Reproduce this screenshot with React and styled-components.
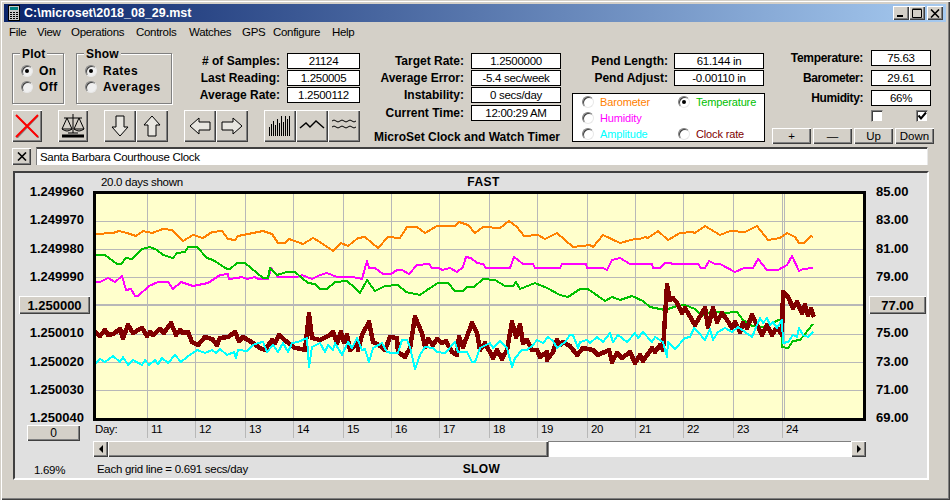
import styled, { createGlobalStyle } from 'styled-components';

const GlobalStyle = createGlobalStyle`
  * { box-sizing: border-box; }
  html, body { margin: 0; padding: 0; background: #d4d0c8; }
  body { font: 11.5px "Liberation Sans", Arial, sans-serif; letter-spacing: -0.3px; color: #000; }
`;

const raised = `
  background: #d4d0c8;
  box-shadow: inset 1px 1px 0 #fff, inset -1px -1px 0 #404040, inset -2px -2px 0 #808080;
`;

const Window = styled.div`
  width: 950px;
  height: 500px;
  padding: 4px;
  overflow: hidden;
  background: #d4d0c8;
  box-shadow: inset 1px 1px 0 #d4d0c8, inset 2px 2px 0 #fff, inset -1px -1px 0 #404040, inset -2px -2px 0 #808080;
`;

const TitleBar = styled.div`
  display: flex;
  align-items: center;
  height: 18px;
  padding: 0 3px 0 4px;
  background: linear-gradient(90deg, #0a246a, #a6caf0);
  color: #fff;
  font-weight: bold;
  font-size: 12.5px;
  letter-spacing: 0;
  svg { display: block; }
`;

const TitleText = styled.span`
  margin-left: 4px;
  flex: 1;
`;

const TitleButton = styled.button`
  ${raised}
  width: 16px;
  height: 14px;
  padding: 0;
  border: 0;
  margin-left: ${(p) => p.$gap || 0}px;
  display: flex;
  align-items: center;
  justify-content: center;
`;

const MenuBar = styled.div`
  display: flex;
  align-items: center;
  height: 20px;
  padding-left: 5px;
`;

const MenuItem = styled.span`
  width: ${(p) => p.$width}px;
`;

const ControlArea = styled.div`
  display: flex;
  padding: 6px 0 3px 8px;
  height: 105px;
`;

const MainBlock = styled.div`
  width: 348px;
`;

const TopRow = styled.div`
  display: flex;
  gap: 12px;
`;

const GroupBox = styled.div`
  position: relative;
  width: ${(p) => p.$width}px;
  height: 51px;
  margin-top: 5px;
  padding: 9px 0 0 ${(p) => p.$pad}px;
  border: 1px solid #808080;
  box-shadow: 1px 1px 0 #fff, inset 1px 1px 0 #fff;
  font-size: 12px;
  font-weight: bold;
  letter-spacing: 0.5px;
`;

const GroupLegend = styled.span`
  position: absolute;
  top: -6px;
  left: 7px;
  padding: 0 2px;
  line-height: 12px;
  background: #d4d0c8;
  font-weight: bold;
  font-size: 12px;
  letter-spacing: 0.2px;
`;

const RadioRow = styled.div`
  display: flex;
  align-items: center;
  gap: ${(p) => p.$gap || 6}px;
  height: 16px;
  color: ${(p) => p.$color || 'inherit'};
`;

const Radio = styled.span`
  flex: none;
  display: flex;
  align-items: center;
  justify-content: center;
  width: 12px;
  height: 12px;
  border-radius: 50%;
  background: ${(p) => p.$bg || '#f0f0f0'};
  border: 1px solid;
  border-color: #808080 #e8e8e8 #e8e8e8 #808080;
  box-shadow: inset 1px 1px 0 #404040;
  &::after {
    content: '';
    width: 4px;
    height: 4px;
    border-radius: 50%;
    background: ${(p) => (p.$on ? '#000' : 'transparent')};
  }
`;

const FieldColumn = styled.div`
  display: flex;
  flex-direction: column;
  gap: ${(p) => p.$gap ?? 1}px;
  flex: ${(p) => (p.$grow ? 1 : 'none')};
  margin-top: ${(p) => p.$top ?? 5}px;
`;

const FieldRow = styled.div`
  display: flex;
  justify-content: flex-end;
  align-items: center;
  gap: ${(p) => p.$gap || 7}px;
  margin-top: ${(p) => p.$top || 0}px;
`;

const FieldLabel = styled.span`
  font-size: 12px;
  font-weight: bold;
  letter-spacing: ${(p) => p.$spacing || 0}px;
  white-space: nowrap;
`;

const Field = styled.div`
  width: ${(p) => p.$width}px;
  height: 16px;
  line-height: 14px;
  border: 1px solid #000;
  background: #fff;
  text-align: center;
  white-space: nowrap;
`;

const Toolbar = styled.div`
  display: flex;
  gap: 16px;
  margin-top: 6px;
`;

const ButtonCluster = styled.div`
  display: flex;
`;

const IconButton = styled.button`
  ${raised}
  width: 32px;
  height: 32px;
  padding: 0;
  border: 0;
  display: flex;
  align-items: center;
  justify-content: center;
`;

const MiddleBlock = styled.div`
  width: 187px;
  margin-left: 14px;
`;

const AppCaption = styled.div`
  margin-top: 9px;
  font-size: 12px;
  font-weight: bold;
  line-height: 14px;
  letter-spacing: 0;
  white-space: nowrap;
`;

const PendBlock = styled.div`
  width: 193px;
  margin-left: 11px;
`;

const PendFields = styled(FieldColumn)`
  padding-right: 1px;
`;

const LegendBox = styled.div`
  display: grid;
  grid-template-columns: 96px 1fr;
  grid-auto-rows: 16px;
  height: 49px;
  margin-top: 7px;
  padding: 0 0 0 9px;
  border: 1px solid #000;
  background: #fff;
  font-size: 11px;
  letter-spacing: -0.15px;
`;

const LegendGap = styled.span``;

const WeatherBlock = styled.div`
  width: 162px;
  margin-left: 7px;
  padding-top: 2px;
`;

const WeatherRows = styled.div`
  display: flex;
  flex-direction: column;
  gap: 4px;
  padding-right: 3px;
`;

const CheckRow = styled.div`
  display: flex;
  gap: 33px;
  margin: 4px 0 0 99px;
`;

const CheckBox = styled.span`
  width: 12px;
  height: 12px;
  background: #fff;
  border: 1px solid;
  border-color: #808080 #d4d0c8 #d4d0c8 #808080;
  box-shadow: inset 1px 1px 0 #404040;
  svg { display: block; }
`;

const AdjustRow = styled.div`
  display: flex;
  gap: 2px;
  margin-top: 6px;
`;

const AdjustButton = styled.button`
  ${raised}
  width: 39px;
  height: 16px;
  padding: 0;
  border: 0;
  font: 11.5px "Liberation Sans", Arial, sans-serif;
  color: #000;
`;

const NoteRow = styled.div`
  display: flex;
  align-items: center;
  gap: 5px;
  padding-left: 8px;
  height: 18px;
`;

const SmallButton = styled.button`
  ${raised}
  width: 19px;
  height: 17px;
  padding: 0;
  border: 0;
  display: flex;
  align-items: center;
  justify-content: center;
`;

const NoteField = styled.div`
  width: 892px;
  height: 18px;
  padding: 2px 0 0 3px;
  line-height: 15px;
  background: #fff;
  border-top: 1px solid #404040;
  border-left: 1px solid #808080;
  border-right: 1px solid #e8e8e8;
  box-shadow: inset 0 1px 0 #404040;
`;

const ChartPanel = styled.div`
  display: flex;
  width: 916px;
  height: 309px;
  margin: 6px 0 0 9px;
  background: #e0e0e0;
  border: 2px solid;
  border-color: #404040 #fff #fff #404040;
`;

const SideColumn = styled.div`
  display: flex;
  flex-direction: column;
  width: ${(p) => p.$width}px;
  padding-top: 12px;
`;

const AxisColumn = styled.div`
  display: flex;
  flex-direction: column;
  justify-content: space-between;
  align-items: ${(p) => (p.$right ? 'flex-start' : 'flex-end')};
  height: 240px;
  padding: ${(p) => (p.$right ? '0 0 0 3px' : '0 3px 0 0')};
`;

const AxisLabel = styled.span`
  height: 14px;
  line-height: 14px;
  font-size: 13px;
  font-weight: bold;
  letter-spacing: 0;
  padding: ${(p) => (p.$right ? '0 0 0 7px' : '0 6px 0 0')};
`;

const AxisButton = styled.button`
  ${raised}
  width: ${(p) => p.$width}px;
  height: 18px;
  margin: -2px 0;
  padding: 0;
  border: 0;
  font: bold 13px "Liberation Sans", Arial, sans-serif;
  color: #000;
`;

const ZeroButton = styled.button`
  ${raised}
  width: 53px;
  height: 16px;
  margin-left: 12px;
  padding: 0;
  border: 0;
  font: 12px "Liberation Sans", Arial, sans-serif;
  color: #000;
`;

const PercentText = styled.div`
  margin: 22px 0 0 19px;
  line-height: 14px;
`;

const CenterColumn = styled.div`
  width: 773px;
`;

const ChartHeader = styled.div`
  display: grid;
  grid-template-columns: 1fr auto 1fr;
  align-items: center;
  height: ${(p) => p.$height}px;
  padding-left: ${(p) => p.$pad}px;
`;

const EdgeWord = styled.span`
  font-size: 12px;
  font-weight: bold;
  letter-spacing: 0.4px;
`;

const PlotFrame = styled.div`
  width: 773px;
  height: 230px;
  border: 3px solid #000;
  background: #ffffcc;
  svg { display: block; }
`;

const DayRow = styled.div`
  display: flex;
  height: 17px;
`;

const DayCaption = styled.span`
  width: 54px;
  padding-left: 2px;
  line-height: 17px;
`;

const DayCell = styled.span`
  width: ${(p) => p.$width}px;
  padding-left: 3px;
  line-height: 17px;
  border-left: 1px solid #b8b8b8;
`;

const ScrollBar = styled.div`
  display: flex;
  height: 16px;
  margin-top: 3px;
`;

const ScrollButton = styled.div`
  ${raised}
  width: 15px;
  display: flex;
  align-items: center;
  justify-content: center;
  &::after {
    content: '';
    border-style: solid;
    border-width: 4px 0 4px 4px;
    border-color: transparent transparent transparent #000;
    transform: ${(p) => (p.$left ? 'scaleX(-1)' : 'none')};
  }
`;

const ScrollThumb = styled.div`
  ${raised}
  width: 440px;
`;

const ScrollTrack = styled.div`
  flex: 1;
  background: #fff;
  border-top: 1px solid #808080;
  border-left: 1px solid #808080;
`;

const ORANGE = '95,234 113,233 119,231 127,233 136,236 143,231 152,233 163,229 172,230 183,241 193,235 203,238 212,232 222,231 228,239 235,240 238,236 253,233 263,231 272,234 278,243 285,243 289,239 303,244 313,238 320,242 333,251 341,243 348,246 358,238 365,237 378,248 388,237 400,238 407,227 417,227 425,233 437,226 455,226 459,222 468,225 475,233 483,227 500,228 509,221 517,227 524,236 538,235 545,239 557,233 573,247 590,245 593,247 603,235 620,243 635,239 640,239 645,237 648,238 658,231 668,240 680,233 692,232 695,233 705,226 720,235 730,231 745,232 757,226 768,240 780,238 787,233 795,237 799,243 804,243 811,236 813,237';

const GREEN = '95,255 105,255 117,264 121,264 126,258 132,259 142,249 150,247 157,250 163,255 173,258 177,253 185,252 188,247 197,247 207,258 213,260 227,269 230,269 237,263 245,263 263,278 268,278 270,268 277,275 287,272 295,272 308,283 315,284 320,289 327,289 335,282 347,281 355,288 360,293 367,280 375,291 385,286 398,285 406,292 420,295 427,290 438,283 448,283 455,291 463,291 467,287 474,287 483,279 495,280 505,286 513,286 516,282 520,289 535,283 547,288 560,295 568,297 580,289 588,289 605,301 612,297 620,300 632,296 643,301 650,307 665,310 677,306 685,305 695,309 702,316 713,311 723,313 737,312 743,320 752,326 763,327 781,319 782,347 788,348 793,341 800,340 813,324';

const MAGENTA = '95,282 100,282 108,278 115,282 122,276 126,290 131,289 135,296 138,296 149,286 158,282 168,282 173,289 181,282 193,286 208,283 220,275 228,274 229,279 237,278 242,277 247,279 255,277 258,279 268,279 271,268 278,277 297,277 302,275 312,279 320,275 327,273 337,277 353,277 362,279 367,261 369,268 375,268 383,274 391,274 397,270 402,270 409,274 417,265 429,264 432,268 439,268 442,270 450,268 457,272 463,267 466,257 471,258 477,263 483,264 486,268 510,268 514,257 518,260 523,264 533,264 535,268 560,268 562,264 586,264 587,268 603,268 607,270 612,260 620,258 630,264 652,264 653,268 660,268 665,263 670,263 673,264 698,264 701,268 705,268 709,261 715,264 720,264 735,272 744,268 753,268 758,259 767,270 778,270 787,265 792,256 799,271 803,269 813,268';

const BROWN = '94,331 100,336 105,330 108,335 113,334 120,329 123,338 128,325 133,333 142,328 147,336 150,332 153,335 160,329 164,333 171,323 176,335 180,330 183,333 188,332 192,342 198,345 205,337 212,339 217,345 220,338 228,337 235,332 239,341 243,337 253,343 260,348 265,350 272,340 275,343 279,335 287,342 295,348 302,349 305,350 309,314 312,338 320,340 330,335 333,332 337,343 341,332 344,342 347,335 350,350 358,343 358,350 362,335 369,322 373,342 382,347 385,350 390,337 397,338 398,352 405,357 410,348 415,317 422,333 425,347 428,339 433,345 437,339 442,343 446,341 452,352 457,355 459,337 463,347 472,323 477,333 480,350 485,343 493,358 497,350 502,359 507,350 512,322 516,337 520,325 523,343 527,340 532,350 537,350 540,357 547,352 547,360 553,352 557,340 560,345 563,342 570,346 577,355 583,348 593,350 598,355 609,350 612,362 617,353 622,358 630,352 635,363 640,355 643,361 652,348 655,352 660,345 663,350 667,285 670,300 673,298 677,303 682,313 685,308 695,325 705,308 708,327 713,308 717,322 722,313 727,320 732,328 735,322 740,332 743,323 747,328 752,315 757,325 762,335 767,325 772,335 777,327 782,335 783,292 788,297 793,308 797,302 802,313 805,305 808,315 811,309 814,317';

const CYAN = '95,364 100,359 105,362 113,356 120,362 123,357 128,365 133,360 142,365 145,360 149,365 155,360 158,364 162,358 168,363 175,355 181,362 187,357 197,350 205,353 212,350 216,353 220,349 227,355 234,352 236,358 238,350 247,351 253,345 258,343 263,342 267,352 273,345 278,352 283,343 288,352 292,343 298,342 307,338 309,367 312,347 320,343 325,352 328,345 333,350 335,343 342,355 348,342 352,348 357,338 362,350 365,349 369,362 373,348 382,343 387,352 392,353 398,353 402,340 407,340 410,347 415,369 420,355 425,347 433,348 437,352 445,353 455,342 458,352 467,352 472,362 475,362 480,348 490,343 493,348 500,341 507,348 512,367 515,358 522,350 527,350 533,345 537,340 543,343 548,337 553,341 557,348 565,342 570,335 573,335 578,348 580,342 587,340 590,343 597,337 603,342 610,333 613,342 618,335 627,342 635,333 638,338 643,332 652,342 655,337 663,342 667,357 668,342 675,349 685,338 690,337 694,328 698,332 705,340 710,329 713,340 718,332 725,328 732,332 738,327 745,332 752,337 760,318 763,323 767,318 770,325 773,322 777,328 782,320 783,343 788,342 793,335 797,337 799,328 803,335 808,337 813,332';

const SERIES = [
  { color: '#ff8000', points: ORANGE, width: 2 },
  { color: '#ff00ff', points: MAGENTA, width: 2 },
  { color: '#00c000', points: GREEN, width: 2 },
  { color: '#800000', points: BROWN, width: 4.5 },
  { color: '#00ffff', points: CYAN, width: 2 },
];

const MENUS = [
  ['File', 28], ['View', 34], ['Operations', 65], ['Controls', 53],
  ['Watches', 53], ['GPS', 31], ['Configure', 59], ['Help', 30],
];
const GRID_Y = [221, 249, 277, 305, 334, 362, 390];
const GRID_X = [147, 195, 245, 293, 343, 391, 439, 489, 537, 587, 635, 683, 733, 782, 784];
const DAYS = [
  [11, 48], [12, 50], [13, 48], [14, 50], [15, 48], [16, 48], [17, 50],
  [18, 48], [19, 50], [20, 48], [21, 48], [22, 50], [23, 49], [24, 60],
];

function Chart() {
  return (
    <svg width="767" height="224" viewBox="96 194 767 224">
      {GRID_Y.map((y) => (
        <line key={y} x1="96" x2="863" y1={y} y2={y} stroke="#b8b8b8" strokeWidth={y === 305 ? 2 : 1} shapeRendering="crispEdges" />
      ))}
      {GRID_X.map((x) => (
        <line key={x} x1={x + 0.5} x2={x + 0.5} y1="194" y2="418" stroke="#b8b8b8" shapeRendering="crispEdges" />
      ))}
      {SERIES.map((s) => (
        <polyline key={s.color} points={s.points} fill="none" stroke={s.color} strokeWidth={s.width} strokeLinejoin="round" shapeRendering="crispEdges" />
      ))}
    </svg>
  );
}

function AppIcon() {
  return (
    <svg width="12" height="16" viewBox="0 0 12 16">
      <rect x="0.5" y="0.5" width="11" height="15" fill="#c8c8c8" stroke="#000" />
      <rect x="2" y="2" width="8" height="3" fill="#008080" />
      {[7, 9, 11, 13].map((y) =>
        [2, 5, 8].map((x) => <rect key={`${x}-${y}`} x={x} y={y} width="2" height="1" fill="#000" />)
      )}
    </svg>
  );
}

function RedCross() {
  return (
    <svg width="24" height="24" viewBox="0 0 24 24">
      <path d="M2 2 L24 24 M23 2 L2 24" stroke="#808080" strokeWidth="1.5" fill="none" />
      <path d="M1 1 L23 23 M23 1 L1 23" stroke="#ff0000" strokeWidth="2" fill="none" />
    </svg>
  );
}

function ScaleIcon() {
  return (
    <svg width="24" height="24" viewBox="0 0 24 24" fill="none" stroke="#000">
      <path d="M12 0 V19 M3 4 H21" />
      <path d="M6 4 L1 15 H11 Z M18 4 L13 15 H23 Z" />
      <path d="M1 15 Q6 19 11 15 M13 15 Q18 19 23 15" />
      <path d="M7 19 H17" />
      <path d="M1 22 H23" strokeWidth="3" />
    </svg>
  );
}

function BlockArrow({ rotate }) {
  return (
    <svg width="24" height="24" viewBox="0 0 24 24" style={{ transform: `rotate(${rotate}deg)` }}>
      <path d="M12 2 L20 11 H16 V22 H8 V11 H4 Z" fill="#e8e6e0" stroke="#000" />
    </svg>
  );
}

function BarsIcon() {
  const heights = [9, 12, 15, 11, 17, 13, 20, 14, 20, 17, 20];
  return (
    <svg width="24" height="24" viewBox="0 0 24 24" stroke="#000">
      {heights.map((h, i) => (
        <line key={i} x1={1.5 + i * 2} x2={1.5 + i * 2} y1={22} y2={22 - h} shapeRendering="crispEdges" />
      ))}
    </svg>
  );
}

function WaveIcon() {
  return (
    <svg width="26" height="20" viewBox="0 0 26 20">
      <path d="M1 12 L7 7 L11 11 L17 5 L25 12" fill="none" stroke="#000" strokeWidth="1.4" />
    </svg>
  );
}

function LinesIcon() {
  return (
    <svg width="26" height="16" viewBox="0 0 26 16" fill="none" stroke="#000">
      <path d="M1 3 q2 -2 4 0 t4 0 t4 0 t4 0 t4 0 t4 0" />
      <path d="M1 9 q2 -2 4 0 t4 0 t4 0 t4 0 t4 0 t4 0" />
    </svg>
  );
}

function CloseGlyph() {
  return (
    <svg width="10" height="9" viewBox="0 0 10 9">
      <path d="M1 0.5 L9 8.5 M9 0.5 L1 8.5" stroke="#000" strokeWidth="1.6" />
    </svg>
  );
}

function App() {
  return (
    <Window>
      <GlobalStyle />
      <TitleBar>
        <AppIcon />
        <TitleText>C:\microset\2018_08_29.mst</TitleText>
        <TitleButton>
          <svg width="10" height="10" viewBox="0 0 10 10"><rect x="1" y="7" width="6" height="2" fill="#000" /></svg>
        </TitleButton>
        <TitleButton>
          <svg width="10" height="10" viewBox="0 0 10 10"><path d="M0.5 1.5 H9.5 V9.5 H0.5 Z M0.5 1 H9.5" fill="none" stroke="#000" /></svg>
        </TitleButton>
        <TitleButton $gap={2}><CloseGlyph /></TitleButton>
      </TitleBar>
      <MenuBar>
        {MENUS.map(([label, width]) => (
          <MenuItem key={label} $width={width}>{label}</MenuItem>
        ))}
      </MenuBar>
      <ControlArea>
        <MainBlock>
          <TopRow>
            <GroupBox $width={52} $pad={8}>
              <GroupLegend>Plot</GroupLegend>
              <RadioRow><Radio $on />On</RadioRow>
              <RadioRow><Radio />Off</RadioRow>
            </GroupBox>
            <GroupBox $width={96} $pad={8}>
              <GroupLegend>Show</GroupLegend>
              <RadioRow><Radio $on />Rates</RadioRow>
              <RadioRow><Radio />Averages</RadioRow>
            </GroupBox>
            <FieldColumn $grow>
              <FieldRow><FieldLabel># of Samples:</FieldLabel><Field $width={73}>21124</Field></FieldRow>
              <FieldRow><FieldLabel>Last Reading:</FieldLabel><Field $width={73}>1.250005</Field></FieldRow>
              <FieldRow><FieldLabel>Average Rate:</FieldLabel><Field $width={73}>1.2500112</Field></FieldRow>
            </FieldColumn>
          </TopRow>
          <Toolbar>
            <IconButton><RedCross /></IconButton>
            <IconButton><ScaleIcon /></IconButton>
            <ButtonCluster>
              <IconButton><BlockArrow rotate={180} /></IconButton>
              <IconButton><BlockArrow rotate={0} /></IconButton>
            </ButtonCluster>
            <ButtonCluster>
              <IconButton><BlockArrow rotate={-90} /></IconButton>
              <IconButton><BlockArrow rotate={90} /></IconButton>
            </ButtonCluster>
            <ButtonCluster>
              <IconButton><BarsIcon /></IconButton>
              <IconButton><WaveIcon /></IconButton>
              <IconButton><LinesIcon /></IconButton>
            </ButtonCluster>
          </Toolbar>
        </MainBlock>
        <MiddleBlock>
          <FieldColumn>
            <FieldRow><FieldLabel>Target Rate:</FieldLabel><Field $width={90}>1.2500000</Field></FieldRow>
            <FieldRow><FieldLabel>Average Error:</FieldLabel><Field $width={90}>-5.4 sec/week</Field></FieldRow>
            <FieldRow><FieldLabel>Instability:</FieldLabel><Field $width={90}>0 secs/day</Field></FieldRow>
            <FieldRow $top={1}><FieldLabel>Current Time:</FieldLabel><Field $width={90}>12:00:29 AM</Field></FieldRow>
          </FieldColumn>
          <AppCaption>MicroSet Clock and Watch Timer</AppCaption>
        </MiddleBlock>
        <PendBlock>
          <PendFields>
            <FieldRow $gap={6}><FieldLabel>Pend Length:</FieldLabel><Field $width={90}>61.144 in</Field></FieldRow>
            <FieldRow $gap={6}><FieldLabel>Pend Adjust:</FieldLabel><Field $width={90}>-0.00110 in</Field></FieldRow>
          </PendFields>
          <LegendBox>
            <RadioRow $color="#ff8000"><Radio $bg="#fff" />Barometer</RadioRow>
            <RadioRow $color="#00c000"><Radio $bg="#fff" $on />Temperature</RadioRow>
            <RadioRow $color="#ff00ff"><Radio $bg="#fff" />Humidity</RadioRow>
            <LegendGap />
            <RadioRow $color="#00ffff"><Radio $bg="#fff" />Amplitude</RadioRow>
            <RadioRow $color="#800000"><Radio $bg="#fff" />Clock rate</RadioRow>
          </LegendBox>
        </PendBlock>
        <WeatherBlock>
          <WeatherRows>
            <FieldRow $gap={8}><FieldLabel $spacing={-0.3}>Temperature:</FieldLabel><Field $width={60}>75.63</Field></FieldRow>
            <FieldRow $gap={8}><FieldLabel $spacing={-0.4}>Barometer:</FieldLabel><Field $width={60}>29.61</Field></FieldRow>
            <FieldRow $gap={8}><FieldLabel $spacing={-0.4}>Humidity:</FieldLabel><Field $width={60}>66%</Field></FieldRow>
          </WeatherRows>
          <CheckRow>
            <CheckBox />
            <CheckBox>
              <svg width="10" height="10" viewBox="0 0 10 10"><path d="M1.5 4.5 L4 7.5 L9 1.5" fill="none" stroke="#000" strokeWidth="2" /></svg>
            </CheckBox>
          </CheckRow>
          <AdjustRow>
            <AdjustButton>+</AdjustButton>
            <AdjustButton>—</AdjustButton>
            <AdjustButton>Up</AdjustButton>
            <AdjustButton>Down</AdjustButton>
          </AdjustRow>
        </WeatherBlock>
      </ControlArea>
      <NoteRow>
        <SmallButton><CloseGlyph /></SmallButton>
        <NoteField>Santa Barbara Courthouse Clock</NoteField>
      </NoteRow>
      <ChartPanel>
        <SideColumn $width={78}>
          <AxisColumn>
            <AxisLabel>1.249960</AxisLabel>
            <AxisLabel>1.249970</AxisLabel>
            <AxisLabel>1.249980</AxisLabel>
            <AxisLabel>1.249990</AxisLabel>
            <AxisButton $width={71}>1.250000</AxisButton>
            <AxisLabel>1.250010</AxisLabel>
            <AxisLabel>1.250020</AxisLabel>
            <AxisLabel>1.250030</AxisLabel>
            <AxisLabel>1.250040</AxisLabel>
          </AxisColumn>
          <ZeroButton>0</ZeroButton>
          <PercentText>1.69%</PercentText>
        </SideColumn>
        <CenterColumn>
          <ChartHeader $height={18} $pad={8}>
            <span>20.0 days shown</span>
            <EdgeWord>FAST</EdgeWord>
          </ChartHeader>
          <PlotFrame><Chart /></PlotFrame>
          <DayRow>
            <DayCaption>Day:</DayCaption>
            {DAYS.map(([day, width]) => (
              <DayCell key={day} $width={width}>{day}</DayCell>
            ))}
          </DayRow>
          <ScrollBar>
            <ScrollButton $left />
            <ScrollThumb />
            <ScrollTrack />
            <ScrollButton />
          </ScrollBar>
          <ChartHeader $height={23} $pad={4}>
            <span>Each grid line = 0.691 secs/day</span>
            <EdgeWord>SLOW</EdgeWord>
          </ChartHeader>
        </CenterColumn>
        <SideColumn $width={61}>
          <AxisColumn $right>
            <AxisLabel $right>85.00</AxisLabel>
            <AxisLabel $right>83.00</AxisLabel>
            <AxisLabel $right>81.00</AxisLabel>
            <AxisLabel $right>79.00</AxisLabel>
            <AxisButton $width={57}>77.00</AxisButton>
            <AxisLabel $right>75.00</AxisLabel>
            <AxisLabel $right>73.00</AxisLabel>
            <AxisLabel $right>71.00</AxisLabel>
            <AxisLabel $right>69.00</AxisLabel>
          </AxisColumn>
        </SideColumn>
      </ChartPanel>
    </Window>
  );
}

export default App;
